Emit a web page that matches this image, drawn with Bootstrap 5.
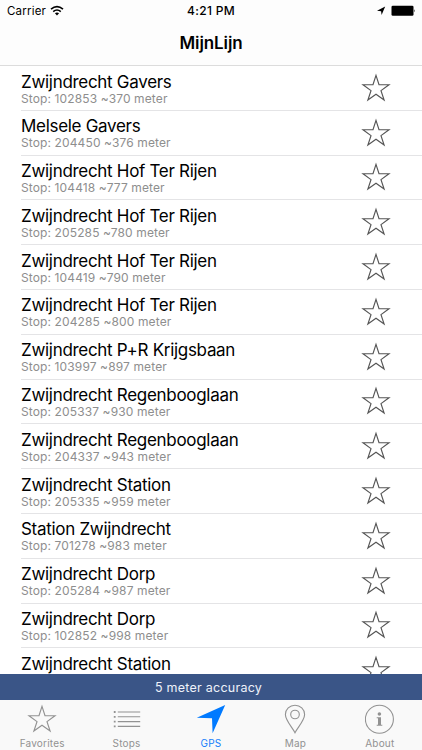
<!DOCTYPE html>
<html lang="en">
<head>
<meta charset="utf-8">
<meta name="viewport" content="width=device-width, initial-scale=1">
<title>MijnLijn</title>
<link href="https://cdn.jsdelivr.net/npm/bootstrap@5.3.0/dist/css/bootstrap.min.css" rel="stylesheet">
<style>
body{font-family:Inter,"Liberation Sans",sans-serif;color:#000;background:#fff}
.app{height:750px;overflow:hidden}
.top-bar{height:66px;border-bottom:1px solid #dcdcdc;background:#fdfdfd}
.status{height:22px;font-size:11.5px;line-height:22px;padding:0 7px 0 7px}
.status>div{flex:1 1 0}
.carrier{letter-spacing:.2px}
.clock{font-size:12px;font-weight:500;letter-spacing:.3px}
.screen-title{font-size:17px;font-weight:600;line-height:43px;letter-spacing:-.1px}
.stops{min-height:0}
.stop-row{height:44.8px;padding-left:21px}
.stop-body{border-bottom:1px solid #e4e4e6;padding-right:31px}
.stop-name{font-size:17px;line-height:20px;letter-spacing:-.3px;padding-top:5.5px}
.stop-info{font-size:12px;line-height:14px;color:#8e8e8e;letter-spacing:.12px}
.star{width:30px;height:30px;color:#555}
.accuracy{height:26px;background:#3a5587;color:#eef2fa;font-size:12.5px;line-height:28px;letter-spacing:.25px;padding-right:5px}
.tabs{height:50px;background:#f9f9f9;color:#929292}
.tab-item{flex:1 1 0;font-size:10px;letter-spacing:.2px;line-height:12px}
.tab-item svg{display:block;margin-top:4px}
.tab-item span{margin-top:3px}
.tab-item.current{color:#147efb}
</style>
<script src="https://cdn.jsdelivr.net/npm/bootstrap@5.3.0/dist/js/bootstrap.bundle.min.js"></script>
</head>
<body>
<svg class="d-none"><symbol id="star" viewBox="0 0 30 30"><path d="M15 2.4 18 11.7 28 11.7 20 17.6 23.1 27 15 21.3 6.9 27 10 17.6 2 11.7 12 11.7Z" fill="none" stroke="currentColor" stroke-width="1.15"/></symbol></svg>
<div class="app d-flex flex-column">
<header class="top-bar flex-shrink-0">
<div class="status d-flex">
<div class="d-flex align-items-center"><span class="carrier">Carrier</span>
<svg class="ms-1" width="14" height="12" viewBox="0 0 14 12"><g fill="none" stroke="#000" stroke-width="1.6"><path d="M1 4.2Q7-.9 13 4.2"/><path d="M3.2 6.6Q7 3.4 10.8 6.6"/></g><path d="M4.9 8.2Q7 6.7 9.1 8.2L7 10.5Z"/></svg></div>
<div class="clock text-center">4:21 PM</div>
<div class="d-flex align-items-center justify-content-end">
<svg width="38" height="12" viewBox="0 0 38 12"><path d="M-.1 5.7 8.2 1.6 4.6 10 4.1 6.2Z"/><rect x="14.5" y=".8" width="22" height="10" rx="1.3"/><path d="M37 4.3q1.1 1.5 0 3Z"/></svg></div>
</div>
<h1 class="screen-title text-center m-0">MijnLijn</h1>
</header>
<main class="stops flex-grow-1 overflow-hidden">
<div class="stop-row"><div class="stop-body h-100 d-flex justify-content-between align-items-center"><div class="h-100"><div class="stop-name">Zwijndrecht Gavers</div><div class="stop-info">Stop: 102853 ~370 meter</div></div><svg class="star"><use href="#star"/></svg></div></div>
<div class="stop-row"><div class="stop-body h-100 d-flex justify-content-between align-items-center"><div class="h-100"><div class="stop-name">Melsele Gavers</div><div class="stop-info">Stop: 204450 ~376 meter</div></div><svg class="star"><use href="#star"/></svg></div></div>
<div class="stop-row"><div class="stop-body h-100 d-flex justify-content-between align-items-center"><div class="h-100"><div class="stop-name">Zwijndrecht Hof Ter Rijen</div><div class="stop-info">Stop: 104418 ~777 meter</div></div><svg class="star"><use href="#star"/></svg></div></div>
<div class="stop-row"><div class="stop-body h-100 d-flex justify-content-between align-items-center"><div class="h-100"><div class="stop-name">Zwijndrecht Hof Ter Rijen</div><div class="stop-info">Stop: 205285 ~780 meter</div></div><svg class="star"><use href="#star"/></svg></div></div>
<div class="stop-row"><div class="stop-body h-100 d-flex justify-content-between align-items-center"><div class="h-100"><div class="stop-name">Zwijndrecht Hof Ter Rijen</div><div class="stop-info">Stop: 104419 ~790 meter</div></div><svg class="star"><use href="#star"/></svg></div></div>
<div class="stop-row"><div class="stop-body h-100 d-flex justify-content-between align-items-center"><div class="h-100"><div class="stop-name">Zwijndrecht Hof Ter Rijen</div><div class="stop-info">Stop: 204285 ~800 meter</div></div><svg class="star"><use href="#star"/></svg></div></div>
<div class="stop-row"><div class="stop-body h-100 d-flex justify-content-between align-items-center"><div class="h-100"><div class="stop-name">Zwijndrecht P+R Krijgsbaan</div><div class="stop-info">Stop: 103997 ~897 meter</div></div><svg class="star"><use href="#star"/></svg></div></div>
<div class="stop-row"><div class="stop-body h-100 d-flex justify-content-between align-items-center"><div class="h-100"><div class="stop-name">Zwijndrecht Regenbooglaan</div><div class="stop-info">Stop: 205337 ~930 meter</div></div><svg class="star"><use href="#star"/></svg></div></div>
<div class="stop-row"><div class="stop-body h-100 d-flex justify-content-between align-items-center"><div class="h-100"><div class="stop-name">Zwijndrecht Regenbooglaan</div><div class="stop-info">Stop: 204337 ~943 meter</div></div><svg class="star"><use href="#star"/></svg></div></div>
<div class="stop-row"><div class="stop-body h-100 d-flex justify-content-between align-items-center"><div class="h-100"><div class="stop-name">Zwijndrecht Station</div><div class="stop-info">Stop: 205335 ~959 meter</div></div><svg class="star"><use href="#star"/></svg></div></div>
<div class="stop-row"><div class="stop-body h-100 d-flex justify-content-between align-items-center"><div class="h-100"><div class="stop-name">Station Zwijndrecht</div><div class="stop-info">Stop: 701278 ~983 meter</div></div><svg class="star"><use href="#star"/></svg></div></div>
<div class="stop-row"><div class="stop-body h-100 d-flex justify-content-between align-items-center"><div class="h-100"><div class="stop-name">Zwijndrecht Dorp</div><div class="stop-info">Stop: 205284 ~987 meter</div></div><svg class="star"><use href="#star"/></svg></div></div>
<div class="stop-row"><div class="stop-body h-100 d-flex justify-content-between align-items-center"><div class="h-100"><div class="stop-name">Zwijndrecht Dorp</div><div class="stop-info">Stop: 102852 ~998 meter</div></div><svg class="star"><use href="#star"/></svg></div></div>
<div class="stop-row"><div class="stop-body h-100 d-flex justify-content-between align-items-center"><div class="h-100"><div class="stop-name">Zwijndrecht Station</div></div><svg class="star"><use href="#star"/></svg></div></div>
</main>
<div class="accuracy text-center flex-shrink-0">5 meter accuracy</div>
<nav class="tabs d-flex flex-shrink-0">
<div class="tab-item d-flex flex-column align-items-center"><svg width="30" height="30"><use href="#star"/></svg><span>Favorites</span></div>
<div class="tab-item d-flex flex-column align-items-center"><svg width="30" height="30" viewBox="0 0 30 30" stroke="currentColor" stroke-width="1.1"><path d="M5.8 8h22.4M5.8 12.8h22.4M5.8 17.6h22.4M5.8 22.4h22.4"/><path d="M1.8 8h1.8M1.8 12.8h1.8M1.8 17.6h1.8M1.8 22.4h1.8" stroke-width="1.8"/></svg><span>Stops</span></div>
<div class="tab-item current d-flex flex-column align-items-center"><svg width="30" height="30" viewBox="0 0 30 30"><path d="M29.2 1 16.6 29.2 16 14.2 .8 13.7Z" fill="#007aff"/></svg><span>GPS</span></div>
<div class="tab-item d-flex flex-column align-items-center"><svg width="30" height="30" viewBox="0 0 30 30" fill="none" stroke="currentColor" stroke-width="1.1"><path d="M15 28.7C12.5 23.5 5.4 16.5 5.4 10.5A9.6 9.3 0 0 1 24.6 10.5C24.6 16.5 17.5 23.5 15 28.7Z"/><circle cx="15" cy="10.5" r="4.3"/></svg><span>Map</span></div>
<div class="tab-item d-flex flex-column align-items-center"><svg width="30" height="30" viewBox="0 0 30 30"><circle cx="14.4" cy="15.3" r="14" fill="none" stroke="currentColor" stroke-width="1.1"/><circle cx="14.4" cy="10" r="1.8" fill="currentColor"/><path d="M11.7 13.2h4.3v7.5h1.3v1h-5.6v-1h1.3v-6.5h-1.3Z" fill="currentColor"/></svg><span>About</span></div>
</nav>
</div>
</body>
</html>
